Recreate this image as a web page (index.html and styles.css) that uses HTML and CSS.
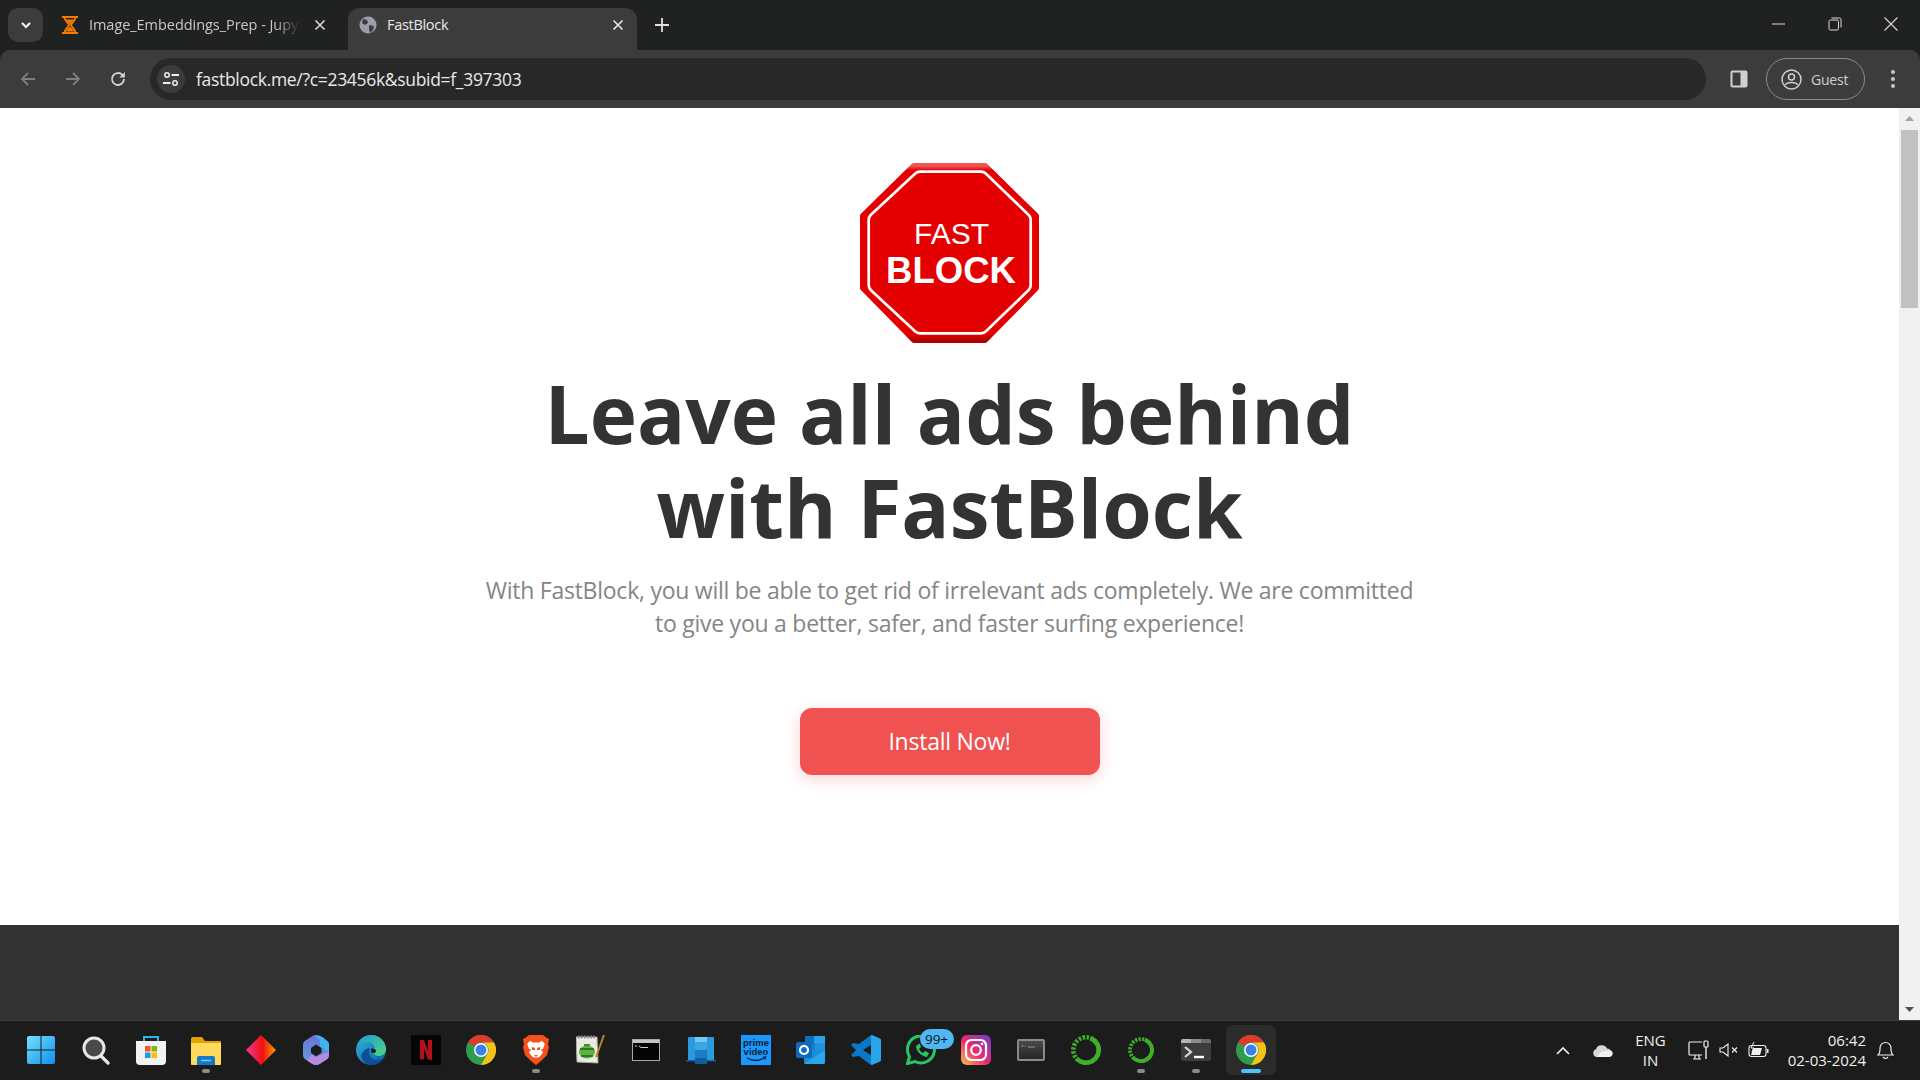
FILE: index.html
```html
<!DOCTYPE html>
<html lang="en">

<head>
    <meta charset="UTF-8">
    <meta name="viewport" content="width=device-width, initial-scale=1.0">
    <title>FastBlock</title>
    <link rel="stylesheet" href="styles.css">
</head>

<body>
    <svg class="defs" width="0" height="0">
        <defs>
            <symbol id="chrome" viewBox="0 0 30 30">
                <circle cx="15" cy="15" r="15" fill="#2f9e4b"/>
                <path d="M15 0a15 15 0 0 1 13 7.500H15a7.500 7.500 0 0 0-6.500 3.750L2 7.500A15 15 0 0 1 15 0z" fill="#df3a2f"/>
                <path d="M28 7.500A15 15 0 0 1 15 30l6.500-11.250A7.500 7.500 0 0 0 15 7.500z" fill="#f9c115"/>
                <circle cx="15" cy="15" r="7" fill="#fff"/>
                <circle cx="15" cy="15" r="5.500" fill="#3b82e8"/>
            </symbol>
            <linearGradient id="sign" x1="0" y1="0" x2="0" y2="1">
                <stop offset="0" stop-color="#f05555"/>
                <stop offset="0.025" stop-color="#e40000"/>
                <stop offset="0.97" stop-color="#e40000"/>
                <stop offset="1" stop-color="#b00000"/>
            </linearGradient>
            <linearGradient id="win" x1="0" y1="0" x2="1" y2="1">
                <stop offset="0" stop-color="#74e0fb"/>
                <stop offset="1" stop-color="#0f8ff0"/>
            </linearGradient>
            <linearGradient id="diamond" x1="0" y1="0" x2="1" y2="0">
                <stop offset="0" stop-color="#f0389a"/>
                <stop offset="0.55" stop-color="#f01010"/>
                <stop offset="1" stop-color="#f9a000"/>
            </linearGradient>
            <linearGradient id="insta" x1="0" y1="1" x2="1" y2="0">
                <stop offset="0" stop-color="#fcc24a"/>
                <stop offset="0.45" stop-color="#ee2a6e"/>
                <stop offset="1" stop-color="#6a3fd0"/>
            </linearGradient>
            <linearGradient id="edge" x1="0" y1="0" x2="1" y2="1">
                <stop offset="0" stop-color="#32b6d8"/>
                <stop offset="1" stop-color="#0c59a4"/>
            </linearGradient>
            <linearGradient id="edge-top" x1="0" y1="0" x2="1" y2="1">
                <stop offset="0" stop-color="#1f9bd8"/>
                <stop offset="1" stop-color="#4fd67e"/>
            </linearGradient>
            <linearGradient id="m365" x1="0" y1="0" x2="0" y2="1">
                <stop offset="0" stop-color="#6f72d8"/>
                <stop offset="1" stop-color="#5ba0dc"/>
            </linearGradient>
            <linearGradient id="cmd-old" x1="0" y1="0" x2="0" y2="1">
                <stop offset="0" stop-color="#4c4c4c"/>
                <stop offset="1" stop-color="#242424"/>
            </linearGradient>
        </defs>
    </svg>

    <div class="tab-strip">
        <div class="tab-search">
            <svg width="14" height="14" viewBox="0 0 14 14"><path d="M3 5l4 4 4-4" fill="none" stroke="#fff" stroke-width="2"/></svg>
        </div>
        <div class="tab tab-jupyter">
            <svg class="favicon" width="18" height="18" viewBox="0 0 18 18"><path d="M1 1h16M1 17h16M3.500 1c0 4 4 6 4.500 8-.5 2-4.500 4-4.500 8M14.500 1c0 4-4 6-4.500 8 .5 2 4.500 4 4.500 8" fill="none" stroke="#f57c00" stroke-width="1.800"/><path d="M5 3.500h8L9 8.500zM4.500 15.500L9 10.500l4.500 5z" fill="#f57c00"/></svg>
            <span class="tab-title tab-title-faded">Image_Embeddings_Prep - Jupy</span>
            <svg class="tab-close" width="12" height="12" viewBox="0 0 12 12"><path d="M1.500 1.500l9 9m0-9l-9 9" stroke="#d8d8d8" stroke-width="1.600"/></svg>
        </div>
        <div class="tab tab-active">
            <svg class="favicon" width="18" height="18" viewBox="0 0 18 18"><circle cx="9" cy="9" r="8.500" fill="#9aa0a6"/><path d="M4 3l4 1 1 3-3 2-3-2zM10 9l5 1-1 4-3 3-1-4z" fill="#3c3c3c"/></svg>
            <span class="tab-title">FastBlock</span>
            <svg class="tab-close" width="12" height="12" viewBox="0 0 12 12"><path d="M1.500 1.500l9 9m0-9l-9 9" stroke="#e8e8e8" stroke-width="1.600"/></svg>
        </div>
        <svg class="new-tab" width="14" height="14" viewBox="0 0 14 14"><path d="M7 0v14M0 7h14" stroke="#e0e0e0" stroke-width="1.800"/></svg>
        <div class="window-controls">
            <svg width="14" height="14" viewBox="0 0 14 14"><path d="M0 7h13" stroke="#d8d8d8"/></svg>
            <svg width="14" height="14" viewBox="0 0 14 14"><rect x="1" y="3" width="9.500" height="10" rx="1.500" fill="none" stroke="#d8d8d8"/><path d="M3.500 1h8a1.500 1.500 0 0 1 1.500 1.500v8" fill="none" stroke="#d8d8d8"/></svg>
            <svg width="14" height="14" viewBox="0 0 14 14"><path d="M.5.500l13 13m0-13l-13 13" stroke="#d8d8d8" stroke-width="1.100"/></svg>
        </div>
    </div>

    <div class="toolbar">
        <svg class="nav-icon" width="18" height="18" viewBox="0 0 18 18"><path d="M16 9H3M9 3L3 9l6 6" fill="none" stroke="#7e7e7e" stroke-width="1.800"/></svg>
        <svg class="nav-icon" width="18" height="18" viewBox="0 0 18 18"><path d="M2 9h13M9 3l6 6-6 6" fill="none" stroke="#7e7e7e" stroke-width="1.800"/></svg>
        <svg class="nav-icon" width="18" height="18" viewBox="0 0 18 18"><path d="M15 9a6 6 0 1 1-1.800-4.300L15 6.500" fill="none" stroke="#d4d4d4" stroke-width="1.800"/><path d="M15.800 2v5.500h-5.500z" fill="#d4d4d4"/></svg>
        <div class="address-bar">
            <div class="site-info">
                <svg width="16" height="16" viewBox="0 0 16 16"><circle cx="4" cy="4" r="2.200" fill="none" stroke="#eee" stroke-width="1.500"/><path d="M8.500 4H16M0 12h7.500" stroke="#eee" stroke-width="1.800"/><circle cx="12" cy="12" r="2.200" fill="none" stroke="#eee" stroke-width="1.500"/></svg>
            </div>
            <span class="url">fastblock.me/?c=23456k&amp;subid=f_397303</span>
        </div>
        <svg class="side-panel" width="18" height="18" viewBox="0 0 18 18"><rect x="0.500" y="0.500" width="17" height="17" rx="2" fill="#d0d0d0"/><rect x="2.500" y="2.500" width="8" height="13" fill="#3c3c3c"/></svg>
        <div class="guest-pill">
            <svg width="21" height="21" viewBox="0 0 21 21"><circle cx="10.500" cy="10.500" r="9.500" fill="none" stroke="#cfcfcf" stroke-width="1.500"/><circle cx="10.500" cy="8" r="3" fill="none" stroke="#cfcfcf" stroke-width="1.500"/><path d="M4 16c2-3.500 11-3.500 13 0" fill="none" stroke="#cfcfcf" stroke-width="1.500"/></svg>
            <span>Guest</span>
        </div>
        <div class="menu-dots"><i></i><i></i><i></i></div>
    </div>

    <div class="viewport">
        <div class="page">
            <section class="hero">
                <svg class="logo" width="180" height="180" viewBox="0 0 180 180" role="img" aria-label="FastBlock">
                    <polygon points="54,3 125,3 176,53 176,125 125,177 54,177 3,125 3,53" fill="url(#sign)" stroke="url(#sign)" stroke-width="6" stroke-linejoin="round"/>
                    <path d="M60 8.700H121Q124 8.700 126 10.700L168.700 52Q170.700 54 170.700 57V122Q170.700 125 168.700 127L126 168.300Q124 170.300 121 170.300H60Q57 170.300 55 168.300L10.700 127Q8.700 125 8.700 122V57Q8.700 54 10.700 52L55 10.700Q57 8.700 60 8.700Z" fill="none" stroke="#fff" stroke-width="2.700"/>
                    <text class="logo-fast" x="91.500" y="81" text-anchor="middle">FAST</text>
                    <text class="logo-block" x="91" y="120" text-anchor="middle">BLOCK</text>
                </svg>
                <h1>Leave all ads behind<br>with FastBlock</h1>
                <p class="lead">With FastBlock, you will be able to get rid of irrelevant ads completely. We are committed to give you a better, safer, and faster surfing experience!</p>
                <a class="install-btn">Install Now!</a>
            </section>
            <footer class="page-footer"></footer>
        </div>
        <div class="scrollbar">
            <svg class="scroll-arrow" width="21" height="21" viewBox="0 0 21 21"><path d="M6 13l4.500-5 4.500 5z" fill="#a3a3a3"/></svg>
            <div class="scroll-thumb"></div>
            <svg class="scroll-arrow scroll-arrow-end" width="21" height="21" viewBox="0 0 21 21"><path d="M6 8l4.500 5 4.500-5z" fill="#505050"/></svg>
        </div>
    </div>

    <div class="taskbar">
        <div class="task-icons">
            <!-- start -->
            <div class="task-item">
                <svg width="30" height="30" viewBox="0 0 30 30"><path d="M1 3q0-2 2-2h11.500v13.500H1zM15.500 1H27q2 0 2 2v11.500H15.500zM1 15.500h13.500V29H3q-2 0-2-2zM15.500 15.500H29V27q0 2-2 2H15.500z" fill="url(#win)"/></svg>
            </div>
            <!-- search -->
            <div class="task-item">
                <svg width="30" height="30" viewBox="0 0 30 30"><circle cx="13" cy="13" r="10" fill="#4a4a4a" stroke="#e8e8e8" stroke-width="3"/><path d="M20 21l7 7" stroke="#e8e8e8" stroke-width="3.200" stroke-linecap="round"/></svg>
            </div>
            <!-- store -->
            <div class="task-item">
                <svg width="30" height="30" viewBox="0 0 30 30"><path d="M8 6V2h14v4" fill="none" stroke="#2fb4ea" stroke-width="2"/><path d="M0 6h30v20q0 4-4 4H4q-4 0-4-4z" fill="#f2f2f2"/><path d="M9 11h5.500v5.500H9z" fill="#f05a28"/><path d="M15.500 11H21v5.500h-5.500z" fill="#7fba00"/><path d="M9 17.500h5.500V23H9z" fill="#1e9be8"/><path d="M15.500 17.500H21V23h-5.500z" fill="#fbbc09"/></svg>
            </div>
            <!-- files -->
            <div class="task-item has-dot">
                <svg width="30" height="30" viewBox="0 0 30 30"><path d="M0 4q0-2 2-2h9l3 4h16v24H0z" fill="#e0a300"/><path d="M0 8h30v20q0 2-2 2H2q-2 0-2-2z" fill="#ffd85c"/><path d="M6 23q0-2 2-2h14q2 0 2 2v7H6z" fill="#1478c8"/><path d="M10 25.500h10" stroke="#7cc4f4" stroke-width="1.500"/></svg>
            </div>
            <div class="task-item">
                <svg width="30" height="30" viewBox="0 0 30 30"><polygon points="15,0 30,15 15,30 0,15" fill="url(#diamond)"/></svg>
            </div>
            <!-- microsoft 365 -->
            <div class="task-item">
                <svg width="26" height="30" viewBox="0 0 26 30"><path d="M13 0q2 0 3.500 1l7 4.500q2.500 1.500 2.500 4v11q0 2.500-2.500 4l-7 4.500q-3.500 2-7 0l-7-4.500Q0 23 0 20.500v-11Q0 7 2.500 5.500l7-4.500Q11 0 13 0z" fill="url(#m365)"/><path d="M12 1q5-2 11.500 4.500Q26 7 26 9.500V17l-9-5V5z" fill="#3db4ea"/><path d="M4 25.500L9 19q2 3 6 2l11-4v3.500q0 2.500-2.500 4l-7 4.500q-3.500 2-7 0z" fill="#b48ae4"/><path d="M13 9.500l5.500 3.500v5l-5.500 3.500L8 18v-5z" fill="#1c1c1c"/></svg>
            </div>
            <!-- edge -->
            <div class="task-item">
                <svg width="30" height="30" viewBox="0 0 30 30"><circle cx="15" cy="15" r="15" fill="url(#edge)"/><path d="M2 8C6 1 13 0 15 0c9 0 15 7 15 14 0 4-3 7-7 7-3 0-5-1-6-3-1-1 0-2 1-3 2-3-1-8-7-8-5 0-8 2-9 1z" fill="url(#edge-top)"/><path d="M14 13c-6 1-9 5-8.500 9 .5 4 5 8 10 8 5.500 0 10-3 13-8-3 3-8 4-11.500 2-3-2-5-6-3-11z" fill="#0d4f97"/><path d="M15 14c2-1 5 0 5 2s-3 3-5 1z" fill="#1c1c1c"/></svg>
            </div>
            <!-- netflix -->
            <div class="task-item">
                <svg width="30" height="30" viewBox="0 0 30 30"><rect width="30" height="30" fill="#050505"/><path d="M9 5h4l4 11V5h4v20l-4-.5-4-10.500v10l-4 .5z" fill="#b3101c"/></svg>
            </div>
            <div class="task-item">
                <svg width="30" height="30"><use href="#chrome" width="30" height="30"/></svg>
            </div>
            <!-- brave -->
            <div class="task-item has-dot">
                <svg width="26" height="30" viewBox="0 0 26 30"><path d="M6 0h14l4 3 2 1-1 6 1 2-2 8-6 6-5 4-5-4-6-6-2-8 1-2-1-6 2-1z" fill="#f4511e"/><path d="M7 6l3 1.500h6L19 6l3 3-2 5-2 .5 2 3-3 4-2 1h-4l-2-1-3-4 2-3-2-.5-2-5z" fill="#fff"/><path d="M9 12l3 1v2H9zM17 12l-3 1v2h3zM11 20h4l-2 2z" fill="#f4511e"/></svg>
            </div>
            <!-- notepad++ -->
            <div class="task-item">
                <svg width="30" height="30" viewBox="0 0 30 30"><path d="M0 2h21l1 26L1 27z" fill="#e8ece0" stroke="#a8a8a8" stroke-width="1"/><path d="M2 2h18" stroke="#888" stroke-width="3" stroke-dasharray="1.500 1.500"/><ellipse cx="11" cy="17" rx="8" ry="6.500" fill="#5bb53f"/><path d="M4 14h14M5 21h12M8 10h6" stroke="#25601d" stroke-width="1.600"/><path d="M28 0L20 22" stroke="#b5862a" stroke-width="2"/></svg>
            </div>
            <!-- cmd -->
            <div class="task-item">
                <svg width="28" height="22" viewBox="0 0 28 22"><rect x="0.500" y="0.500" width="27" height="21" fill="#050505" stroke="#a8a8a8"/><rect x="1" y="1" width="26" height="3" fill="#c4c4c4"/><path d="M3 7h2M7 7l2 1.500h7" fill="none" stroke="#ccc"/></svg>
            </div>
            <!-- phone link -->
            <div class="task-item">
                <svg width="30" height="27" viewBox="0 0 30 27"><path d="M3 0h24q1 0 1 1v22H2V1q0-1 1-1z" fill="#2a9bdc"/><path d="M9 0h12v5H9z" fill="#6fcbf2"/><path d="M9 5h12v8H9z" fill="#39a6e6"/><path d="M9 13h12v8H9z" fill="#1f7cc4"/><path d="M9 21h12v6H9z" fill="#0f5ea3"/><path d="M0 23h30v1.500H0z" fill="#125e9f"/></svg>
            </div>
            <!-- prime video -->
            <div class="task-item">
                <svg width="30" height="30" viewBox="0 0 30 30"><rect width="30" height="30" fill="#1a98ff"/><text class="prime-text" x="15" y="10.500" text-anchor="middle">prime</text><text class="prime-text" x="15" y="20" text-anchor="middle">video</text><path d="M6 23q9 5 17 0M22 22.500l2.500-.5-.5 2.500" fill="none" stroke="#10202c" stroke-width="1.400"/></svg>
            </div>
            <!-- outlook -->
            <div class="task-item">
                <svg width="30" height="28" viewBox="0 0 30 28"><path d="M9 1q0-1 1-1h18q1 0 1 1v12H9z" fill="#0f6cbd"/><path d="M18 0h11v7H18z" fill="#29a4e8"/><path d="M8 7h11v7H8z" fill="#1a7fd4"/><path d="M19 7h10v7H19z" fill="#2590dc"/><path d="M8 14l21-1v13q0 2-2 2H10q-2 0-2-2z" fill="#1490df"/><path d="M8 28l21-14v12q0 2-2 2z" fill="#28a8ea"/><rect x="0" y="6" width="16" height="16" rx="2" fill="#0f6cbd"/><circle cx="8" cy="14" r="4" fill="none" stroke="#fff" stroke-width="2.200"/></svg>
            </div>
            <!-- vs code -->
            <div class="task-item">
                <svg width="30" height="30" viewBox="0 0 30 30"><path d="M0 10l2-2 6 1 12-9v10l-8 5 8 5v10L8 21l-6 1-2-2 5-5z" fill="#0a78c8"/><path d="M21 0l8 3.500q1 .5 1 1.500v20q0 1-1 1.500L21 30l-1-.5V.500z" fill="#2aa5ec"/></svg>
            </div>
            <!-- whatsapp -->
            <div class="task-item">
                <svg width="30" height="30" viewBox="0 0 30 30"><path d="M1.500 28.500l2-7A13.500 13.500 0 1 1 9 26.500z" fill="none" stroke="#23c861" stroke-width="3"/><path d="M10 11c0 5 5 10 11 11l2-4-4-2-2 2c-2-1-3-2-4-4l2-2-1.500-3.500z" fill="#23c861"/></svg>
                <span class="badge">99+</span>
            </div>
            <!-- instagram -->
            <div class="task-item">
                <svg width="30" height="30" viewBox="0 0 30 30"><rect width="30" height="30" rx="6" fill="url(#insta)"/><rect x="5" y="5" width="20" height="20" rx="5.500" fill="none" stroke="#fff" stroke-width="2.200"/><circle cx="15" cy="15" r="4.800" fill="none" stroke="#fff" stroke-width="2.200"/><circle cx="21" cy="9" r="1.300" fill="#fff"/></svg>
            </div>
            <div class="task-item">
                <svg width="28" height="22" viewBox="0 0 28 22"><rect x="1" y="1" width="26" height="20" rx="1" fill="url(#cmd-old)" stroke="#8a8a8a" stroke-width="2"/><path d="M4.500 7h2M8 7h1M11 8h7" stroke="#9a9a9a" stroke-width="1.200"/></svg>
            </div>
            <!-- ring apps -->
            <div class="task-item">
                <svg width="30" height="30" viewBox="0 0 30 30"><circle cx="15" cy="15" r="12.700" fill="none" stroke="#3fae29" stroke-width="4.500" stroke-dasharray="2.500 1.500"/><circle cx="15" cy="15" r="12.700" fill="none" stroke="#3fae29" stroke-width="4.500" stroke-dasharray="46 34" transform="rotate(-70 15 15)"/></svg>
            </div>
            <div class="task-item has-dot">
                <svg width="26" height="26" viewBox="0 0 26 26"><circle cx="13" cy="13" r="11" fill="none" stroke="#3fae29" stroke-width="3.800" stroke-dasharray="2.200 1.300"/><circle cx="13" cy="13" r="11" fill="none" stroke="#3fae29" stroke-width="3.800" stroke-dasharray="40 30" transform="rotate(-70 13 13)"/></svg>
            </div>
            <!-- terminal -->
            <div class="task-item has-dot">
                <svg width="30" height="22" viewBox="0 0 30 22"><rect width="30" height="22" rx="2" fill="#3d3d3d"/><path d="M2 0h8v4H0V2q0-2 2-2z" fill="#b5b5b5"/><path d="M10 0h10v4H10z" fill="#8c8c8c"/><path d="M20 0h8q2 0 2 2v2H20z" fill="#6a6a6a"/><path d="M4 8l6 5-6 5" fill="none" stroke="#d8d8d8" stroke-width="2.200"/><path d="M13 18h10" stroke="#fff" stroke-width="2.400"/></svg>
            </div>
            <div class="task-item task-item-active">
                <svg width="30" height="30"><use href="#chrome" width="30" height="30"/></svg>
            </div>
        </div>

        <div class="tray">
            <svg class="tray-chevron" width="14" height="9" viewBox="0 0 14 9"><path d="M1 8l6-6 6 6" fill="none" stroke="#f0f0f0" stroke-width="1.600"/></svg>
            <svg class="tray-cloud" width="20" height="13" viewBox="0 0 20 13"><path d="M4 13a4 4 0 0 1-1-7.800A6 6 0 0 1 14 4.500 4.500 4.500 0 0 1 16 13z" fill="#d8d8d8"/><path d="M4 13h12a3.500 3.500 0 0 0 2-6.500L8 8z" fill="#f2f2f2"/></svg>
            <div class="tray-lang"><span>ENG</span><span>IN</span></div>
            <svg class="tray-net" width="21" height="21" viewBox="0 0 21 21"><path d="M14 2H2a1 1 0 0 0-1 1v11a1 1 0 0 0 1 1h12M5 19h8M7 15v4M11 15v4" fill="none" stroke="#f0f0f0" stroke-width="1.200"/><rect x="16" y="1" width="4" height="6" rx="1" fill="none" stroke="#f0f0f0" stroke-width="1.200"/><path d="M18 7v12" stroke="#f0f0f0" stroke-width="1.400"/></svg>
            <svg class="tray-volume" width="20" height="14" viewBox="0 0 20 14"><path d="M1 5v4h3l5 4V1L4 5z" fill="none" stroke="#f0f0f0" stroke-width="1.100"/><path d="M13 4.500l5 5m0-5l-5 5" stroke="#f0f0f0" stroke-width="1.100"/></svg>
            <svg class="tray-battery" width="21" height="16" viewBox="0 0 21 16"><rect x="1" y="3.500" width="17" height="11" rx="2.500" fill="none" stroke="#f0f0f0" stroke-width="1.100"/><path d="M3 13l2-7h9l-2 7z" fill="#f0f0f0"/><path d="M19 7h1.500v4H19z" fill="#f0f0f0"/><path d="M6 0L3 6h3L4 10" fill="none" stroke="#f0f0f0"/></svg>
            <div class="tray-clock"><span>06:42</span><span>02-03-2024</span></div>
            <svg class="tray-bell" width="17" height="19" viewBox="0 0 17 19"><path d="M1 14q2-2 2-5V7a5.500 5.500 0 0 1 11 0v2q0 3 2 5zM6 16q2.500 3 5 0" fill="none" stroke="#f0f0f0" stroke-width="1.200"/></svg>
        </div>
    </div>
</body>

</html>
```

FILE: styles.css
```css
html,
body {
    margin: 0;
    padding: 0;
    height: 100%;
    overflow: hidden;
}

body {
    display: flex;
    flex-direction: column;
    height: 100vh;
    font-family: "Open Sans", Arial, sans-serif;
    background-color: #202221;
}

.defs {
    position: absolute;
}

/* Browser tabs */
.tab-strip {
    display: flex;
    flex: none;
    align-items: flex-end;
    height: 50px;
    padding-left: 8px;
    box-sizing: border-box;
    background-color: #202221;
}

.tab-search {
    display: flex;
    align-items: center;
    justify-content: center;
    align-self: flex-start;
    width: 35px;
    height: 34px;
    margin-top: 8px;
    margin-right: 8px;
    border-radius: 10px;
    background-color: #3c3c3c;
}

.tab {
    display: flex;
    align-items: center;
    width: 289px;
    height: 42px;
    box-sizing: border-box;
    padding: 0 13px 9px 10px;
    border-radius: 12px 12px 0 0;
    font-size: 14.500px;
    letter-spacing: -0.300px;
    color: #c8c8c8;
}

.tab-jupyter {
    width: 297px;
    padding-right: 22px;
    letter-spacing: -0.050px;
}

.tab-active {
    color: #e8e8e8;
    background-color: #3c3c3c;
    padding-left: 11px;
}

.favicon {
    flex: none;
    margin-right: 10px;
}

.tab-title {
    flex: 1;
    overflow: hidden;
    white-space: nowrap;
}

.tab-title-faded {
    -webkit-mask-image: linear-gradient(to right, #000 88%, transparent 100%);
    mask-image: linear-gradient(to right, #000 88%, transparent 100%);
}

.tab-close {
    flex: none;
    margin-left: 14px;
}

.new-tab {
    align-self: center;
    margin-left: 18px;
}

.window-controls {
    display: flex;
    align-items: center;
    gap: 42px;
    align-self: flex-start;
    height: 48px;
    margin-left: auto;
    margin-right: 22px;
}

/* Toolbar and address bar */
.toolbar {
    display: flex;
    flex: none;
    align-items: center;
    height: 58px;
    box-sizing: border-box;
    padding-left: 19px;
    background-color: #3c3c3c;
    border-radius: 10px 10px 0 0;
}

.nav-icon {
    margin-right: 27px;
}

.address-bar {
    display: flex;
    align-items: center;
    width: 1556px;
    height: 42px;
    margin-left: -4px;
    padding-left: 7px;
    box-sizing: border-box;
    border-radius: 21px;
    background-color: #282828;
}

.site-info {
    display: flex;
    align-items: center;
    justify-content: center;
    width: 28px;
    height: 28px;
    margin-right: 11px;
    border-radius: 50%;
    background-color: #3c3c3c;
}

.url {
    font-size: 17.500px;
    letter-spacing: -0.310px;
    color: #e8e8e8;
}

.side-panel {
    margin-left: 24px;
}

.guest-pill {
    display: flex;
    align-items: center;
    gap: 9px;
    width: 99px;
    height: 42px;
    margin-left: 18px;
    padding-left: 14px;
    box-sizing: border-box;
    border: 1px solid #8a8a8a;
    border-radius: 21px;
    font-size: 14px;
    letter-spacing: -0.200px;
    color: #cfcfcf;
}

.menu-dots {
    display: flex;
    flex-direction: column;
    gap: 3px;
    margin-left: 26px;
}

.menu-dots i {
    width: 4px;
    height: 4px;
    border-radius: 50%;
    background-color: #c8c8c8;
}

/* Page area */
.viewport {
    display: flex;
    flex: 1;
    min-height: 0;
}

.page {
    display: flex;
    flex: 1;
    flex-direction: column;
    min-width: 0;
}

.hero {
    display: flex;
    flex: 1;
    flex-direction: column;
    align-items: center;
    padding-top: 55px;
    box-sizing: border-box;
    text-align: center;
    background-color: #fff;
}

.logo {
    flex: none;
    display: block;
}

.logo-fast {
    font-family: "Liberation Sans", Arial, sans-serif;
    font-size: 30px;
    fill: #fff;
}

.logo-block {
    font-family: "Liberation Sans", Arial, sans-serif;
    font-size: 36.500px;
    font-weight: bold;
    fill: #fff;
}

h1 {
    margin: 23px 0 0;
    font-size: 80px;
    line-height: 94px;
    font-weight: 700;
    color: #333;
}

.lead {
    width: 940px;
    margin: 20px 0 0;
    font-size: 23px;
    letter-spacing: -0.250px;
    line-height: 33px;
    color: #858585;
}

.install-btn {
    display: flex;
    align-items: center;
    justify-content: center;
    width: 300px;
    height: 67px;
    margin-top: 68px;
    padding-bottom: 2px;
    box-sizing: border-box;
    border-radius: 12px;
    font-size: 23px;
    letter-spacing: -0.250px;
    color: #fff;
    background-color: #f05252;
    box-shadow: 0 4px 16px rgba(240, 82, 82, 0.25);
}

.page-footer {
    flex: none;
    height: 95px;
    background-color: #333;
}

.scrollbar {
    position: relative;
    flex: none;
    width: 21px;
    background-color: #f1f1f1;
}

.scroll-arrow {
    display: block;
}

.scroll-arrow-end {
    position: absolute;
    bottom: 0;
    left: 0;
}

.scroll-thumb {
    width: 17px;
    height: 178px;
    margin: 1px 2px 0;
    background-color: #c1c1c1;
}

/* Windows taskbar */
.taskbar {
    display: flex;
    flex: none;
    align-items: center;
    justify-content: space-between;
    height: 60px;
    box-sizing: border-box;
    padding-left: 13.500px;
    padding-bottom: 1px;
    border-top: 1px solid #3e3e3e;
    background-color: #1c1c1c;
}

.task-icons {
    display: flex;
}

.task-item {
    position: relative;
    display: flex;
    align-items: center;
    justify-content: center;
    width: 55px;
    height: 50px;
}

.has-dot::after,
.task-item-active::after {
    content: "";
    position: absolute;
    bottom: 2px;
    left: 50%;
    width: 8px;
    height: 4px;
    margin-left: -4px;
    border-radius: 2px;
    background-color: #8a8a8a;
}

.task-item-active {
    width: 50px;
    margin-left: 2px;
    border-radius: 6px;
    background-color: #2b2b2b;
}

.task-item-active::after {
    width: 20px;
    margin-left: -10px;
    background-color: #4cc2ff;
}

.badge {
    position: absolute;
    top: 4px;
    left: 26px;
    width: 34px;
    height: 20px;
    border-radius: 10px;
    font-size: 13.500px;
    line-height: 20px;
    text-align: center;
    color: #111;
    background-color: #4db8f5;
}

.prime-text {
    font-family: "Liberation Sans", Arial, sans-serif;
    font-size: 9.500px;
    font-weight: bold;
    fill: #10202c;
}

.tray {
    display: flex;
    align-items: center;
    padding-right: 26px;
    color: #f0f0f0;
    font-size: 15px;
    line-height: 20px;
}

.tray-lang {
    display: flex;
    flex-direction: column;
    align-items: center;
    margin-left: 22px;
}

.tray-cloud {
    margin-left: 23px;
}

.tray-net {
    margin-left: 22px;
}

.tray-volume {
    margin-left: 10px;
}

.tray-battery {
    margin-left: 9px;
}

.tray-clock {
    display: flex;
    flex-direction: column;
    align-items: flex-end;
    margin-left: 19px;
}

.tray-bell {
    margin-left: 11px;
}
```
